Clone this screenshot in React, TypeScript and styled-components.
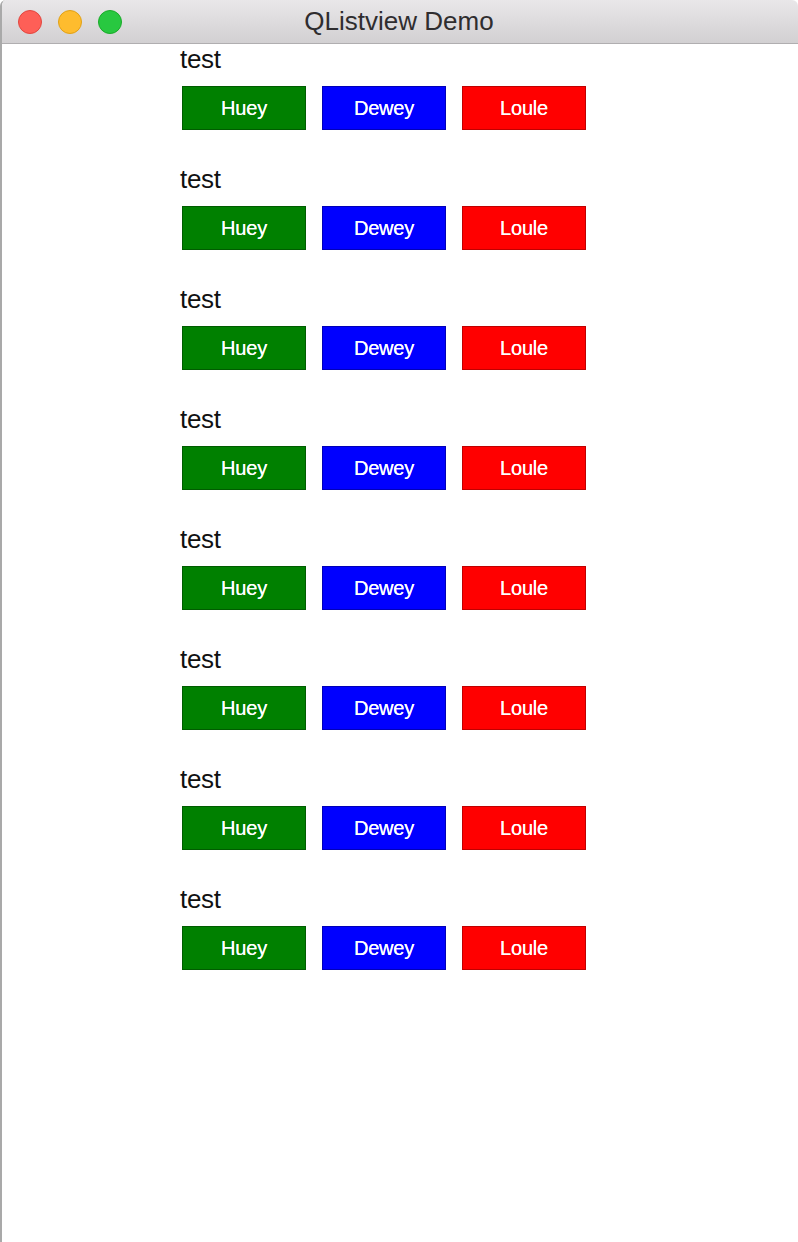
import styled, { createGlobalStyle } from 'styled-components';

const GlobalStyle = createGlobalStyle`
  html, body {
    margin: 0;
    padding: 0;
    background: #ffffff;
  }

  body {
    font-family: 'Liberation Sans', Arial, sans-serif;
  }
`;

const Window = styled.div`
  width: 798px;
  height: 1242px;
  box-sizing: border-box;
  display: flex;
  flex-direction: column;
  background: #ffffff;
  border-left: 2px solid #a9a9a9;
  border-top-left-radius: 6px;
  border-top-right-radius: 6px;
  overflow: hidden;
`;

const TitleBar = styled.div`
  position: relative;
  height: 43px;
  flex-shrink: 0;
  display: flex;
  align-items: center;
  justify-content: center;
  background: linear-gradient(#e9e7e9, #d2d0d2);
  border-bottom: 1px solid #b0aeb0;
`;

const Lights = styled.div`
  position: absolute;
  left: 16px;
  top: 10px;
  display: flex;
  gap: 16px;
`;

const Light = styled.span<{ $fill: string; $edge: string }>`
  display: block;
  width: 24px;
  height: 24px;
  border-radius: 50%;
  box-sizing: border-box;
  background: ${(p) => p.$fill};
  border: 1px solid ${(p) => p.$edge};
`;

const Title = styled.div`
  font-size: 26px;
  color: #2f2d2f;
  margin-left: -2px;
`;

const List = styled.div`
  display: flex;
  flex-direction: column;
  gap: 34px;
  padding: 0 0 0 178px;
`;

const Item = styled.div`
  display: flex;
  flex-direction: column;
  gap: 12px;
`;

const Label = styled.div`
  font-size: 26px;
  line-height: 30px;
  letter-spacing: -0.3px;
  color: #111111;
`;

const Buttons = styled.div`
  display: flex;
  gap: 16px;
  padding-left: 2px;
`;

const Duck = styled.button<{ $fill: string; $edge: string }>`
  width: 124px;
  height: 44px;
  box-sizing: border-box;
  margin: 0;
  padding: 0;
  background: ${(p) => p.$fill};
  border: 1px solid ${(p) => p.$edge};
  color: #ffffff;
  font-family: 'Liberation Sans', Arial, sans-serif;
  font-size: 20px;
  letter-spacing: -0.2px;
  text-align: center;
  text-shadow: 0 0 0.4px #ffffff;
`;

const ducks = [
  { name: 'Huey', fill: '#008000', edge: '#005c00' },
  { name: 'Dewey', fill: '#0000ff', edge: '#0000b8' },
  { name: 'Loule', fill: '#ff0000', edge: '#c00000' },
];

function App() {
  const rows = Array.from({ length: 8 }, (_, i) => i);

  return (
    <>
      <GlobalStyle />
      <Window>
        <TitleBar>
          <Lights>
            <Light $fill='#fe5f57' $edge='#e2463f' />
            <Light $fill='#febc2e' $edge='#e1a116' />
            <Light $fill='#28c840' $edge='#1aab29' />
          </Lights>
          <Title>QListview Demo</Title>
        </TitleBar>

        <List>
          {rows.map((i) => (
            <Item key={i}>
              <Label>test</Label>
              <Buttons>
                {ducks.map((d) => (
                  <Duck key={d.name} $fill={d.fill} $edge={d.edge}>
                    {d.name}
                  </Duck>
                ))}
              </Buttons>
            </Item>
          ))}
        </List>
      </Window>
    </>
  );
}

export default App;
